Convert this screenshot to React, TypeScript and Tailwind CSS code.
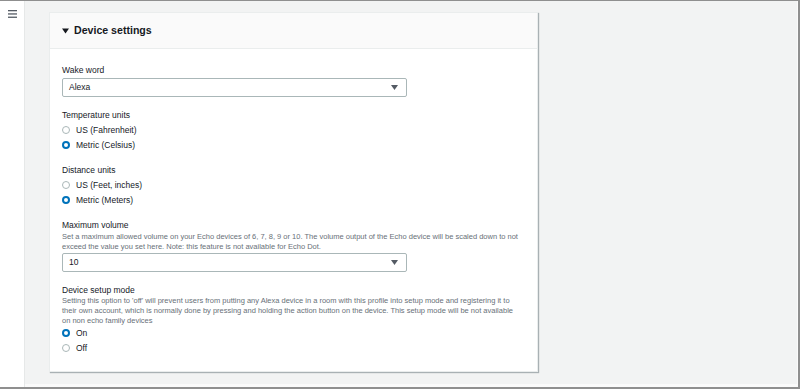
import React from "react";

const font = { fontFamily: '"Liberation Sans", Arial, sans-serif' };

function Radio({ checked, label }: { checked?: boolean; label: string }) {
  return (
    <div className="flex h-[15px] items-center">
      {checked ? (
        <span className="box-border h-[8px] w-[8px] rounded-full border-[2.5px] border-[#0073bb] bg-white" />
      ) : (
        <span className="box-border h-[8px] w-[8px] rounded-full border border-[#aab7b8] bg-white" />
      )}
      <span className="ml-[6px] text-[8.5px] leading-[12px] text-[#16191f]">{label}</span>
    </div>
  );
}

function Select({ value }: { value: string }) {
  return (
    <div className="box-border flex h-[19px] w-[345px] items-center justify-between rounded-[2px] border border-[#aab7b8] bg-white pl-[6px] pr-[8px]">
      <span className="text-[8.5px] text-[#16191f]">{value}</span>
      <svg width="7" height="5" viewBox="0 0 7 5">
        <path d="M0 0 H7 L3.5 5 Z" fill="#545b64" />
      </svg>
    </div>
  );
}

function Label({ children }: { children: React.ReactNode }) {
  return <div className="text-[8.5px] leading-[12px] text-[#16191f]">{children}</div>;
}

function Desc({ children }: { children: React.ReactNode }) {
  return <div className="text-[7.5px] leading-[10px] text-[#687078]">{children}</div>;
}

export default function App() {
  return (
    <div
      style={font}
      className="box-border flex h-[389px] w-[800px] border-t border-r-2 border-b-2 border-[#8f8f8f] bg-white"
    >
      <div className="box-border flex h-full w-[25px] shrink-0 justify-center border-r border-[#e6e8e8] bg-white pt-[9px]">
        <svg width="9" height="8" viewBox="0 0 9 8">
          <rect x="0" y="0" width="9" height="1.3" fill="#545b64" />
          <rect x="0" y="3.3" width="9" height="1.3" fill="#545b64" />
          <rect x="0" y="6.6" width="9" height="1.3" fill="#545b64" />
        </svg>
      </div>
      <div className="box-border flex-1 border-r border-b-[3px] border-[#fafafa] bg-[#f2f3f3] pl-[24px] pt-[11px]">
        <div className="box-border w-[489px] border border-[#eaeded] bg-white shadow-[1px_1px_1px_rgba(0,28,36,0.3)]">
          <div className="flex h-[36px] items-center border-b border-[#eaeded] bg-[#fafafa] pl-[12px]">
            <svg width="7" height="6" viewBox="0 0 7 6">
              <path d="M0 0.5 H7 L3.5 5.5 Z" fill="#16191f" />
            </svg>
            <span className="ml-[5px] text-[10.6px] font-bold text-[#16191f]">Device settings</span>
          </div>
          <div className="px-[12px] pb-[16px] pt-[15px]">
            <Label>Wake word</Label>
            <div className="mt-[2px]">
              <Select value="Alexa" />
            </div>
            <div className="mt-[12px]">
              <Label>Temperature units</Label>
              <div className="mt-[1px]">
                <Radio label="US (Fahrenheit)" />
                <Radio checked label="Metric (Celsius)" />
              </div>
            </div>
            <div className="mt-[12px]">
              <Label>Distance units</Label>
              <div className="mt-[1px]">
                <Radio label="US (Feet, inches)" />
                <Radio checked label="Metric (Meters)" />
              </div>
            </div>
            <div className="mt-[12px]">
              <Label>Maximum volume</Label>
              <div className="mt-[1px]">
                <Desc>
                  Set a maximum allowed volume on your Echo devices of 6, 7, 8, 9 or 10. The volume output of the Echo device will be scaled down to not exceed the value you set here. Note: this feature is not available for Echo Dot.
                </Desc>
              </div>
              <div className="mt-[1px]">
                <Select value="10" />
              </div>
            </div>
            <div className="mt-[12px]">
              <Label>Device setup mode</Label>
              <div className="pr-[3px]">
                <Desc>
                  Setting this option to 'off' will prevent users from putting any Alexa device in a room with this profile into setup mode and registering it to their own account, which is normally done by pressing and holding the action button on the device. This setup mode will be not available on non echo family devices
                </Desc>
              </div>
              <div className="mt-[-1px]">
                <Radio checked label="On" />
                <Radio label="Off" />
              </div>
            </div>
          </div>
        </div>
      </div>
    </div>
  );
}
